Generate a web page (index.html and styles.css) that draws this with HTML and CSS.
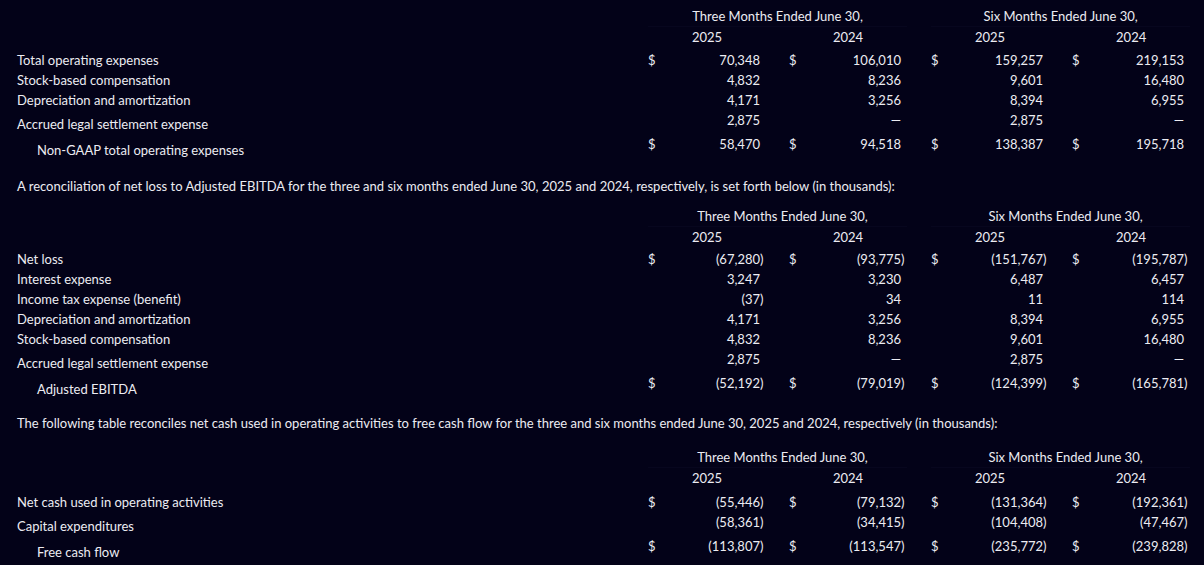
FILE: index.html
```html
<!DOCTYPE html>
<html lang="en">
<head>
<meta charset="utf-8">
<title>Non-GAAP reconciliation</title>
<link rel="stylesheet" href="styles.css">
</head>
<body>
<main class="page">
  <table class="fin">
    <colgroup>
      <col class="c-label"><col class="c-cur"><col class="c-num"><col class="c-par"><col class="c-gap">
      <col class="c-cur"><col class="c-num"><col class="c-par"><col class="c-gap2">
      <col class="c-cur"><col class="c-num"><col class="c-par"><col class="c-gap">
      <col class="c-cur"><col class="c-num"><col class="c-par">
    </colgroup>
    <tr class="r-hd1">
      <td></td><td colspan="7" class="hd">Three Months Ended June 30,</td><td></td><td colspan="7" class="hd">Six Months Ended June 30,</td>
    </tr>
    <tr class="r-hd2">
      <td></td><td colspan="3" class="hd">2025</td><td></td><td colspan="3" class="hd">2024</td><td></td><td colspan="3" class="hd">2025</td><td></td><td colspan="3" class="hd">2024</td>
    </tr>
    <tr class="r">
      <td class="label">Total operating expenses</td>
      <td class="cur">$</td><td class="num">70,348</td><td class="par"></td><td></td>
      <td class="cur">$</td><td class="num">106,010</td><td class="par"></td><td></td>
      <td class="cur">$</td><td class="num">159,257</td><td class="par"></td><td></td>
      <td class="cur">$</td><td class="num">219,153</td><td class="par"></td>
    </tr>
    <tr class="r">
      <td class="label">Stock-based compensation</td>
      <td class="cur"></td><td class="num">4,832</td><td class="par"></td><td></td>
      <td class="cur"></td><td class="num">8,236</td><td class="par"></td><td></td>
      <td class="cur"></td><td class="num">9,601</td><td class="par"></td><td></td>
      <td class="cur"></td><td class="num">16,480</td><td class="par"></td>
    </tr>
    <tr class="r">
      <td class="label">Depreciation and amortization</td>
      <td class="cur"></td><td class="num">4,171</td><td class="par"></td><td></td>
      <td class="cur"></td><td class="num">3,256</td><td class="par"></td><td></td>
      <td class="cur"></td><td class="num">8,394</td><td class="par"></td><td></td>
      <td class="cur"></td><td class="num">6,955</td><td class="par"></td>
    </tr>
    <tr class="r-pre">
      <td class="label">Accrued legal settlement expense</td>
      <td class="cur"></td><td class="num">2,875</td><td class="par"></td><td></td>
      <td class="cur"></td><td class="num">—</td><td class="par"></td><td></td>
      <td class="cur"></td><td class="num">2,875</td><td class="par"></td><td></td>
      <td class="cur"></td><td class="num">—</td><td class="par"></td>
    </tr>
    <tr class="r-tot">
      <td class="label indent">Non-GAAP total operating expenses</td>
      <td class="cur">$</td><td class="num">58,470</td><td class="par"></td><td></td>
      <td class="cur">$</td><td class="num">94,518</td><td class="par"></td><td></td>
      <td class="cur">$</td><td class="num">138,387</td><td class="par"></td><td></td>
      <td class="cur">$</td><td class="num">195,718</td><td class="par"></td>
    </tr>
  </table>

  <p class="note note-1">A reconciliation of net loss to Adjusted EBITDA for the three and six months ended June 30, 2025 and 2024, respectively, is set forth below (in thousands):</p>

  <table class="fin fin-2">
    <colgroup>
      <col class="c-label"><col class="c-cur"><col class="c-num"><col class="c-par"><col class="c-gap">
      <col class="c-cur"><col class="c-num"><col class="c-par"><col class="c-gap2">
      <col class="c-cur"><col class="c-num"><col class="c-par"><col class="c-gap">
      <col class="c-cur"><col class="c-num"><col class="c-par">
    </colgroup>
    <tr class="r-hd1">
      <td></td><td colspan="7" class="hd hd-shift">Three Months Ended June 30,</td><td></td><td colspan="7" class="hd hd-shift">Six Months Ended June 30,</td>
    </tr>
    <tr class="r-hd2">
      <td></td><td colspan="3" class="hd">2025</td><td></td><td colspan="3" class="hd">2024</td><td></td><td colspan="3" class="hd">2025</td><td></td><td colspan="3" class="hd">2024</td>
    </tr>
    <tr class="r">
      <td class="label">Net loss</td>
      <td class="cur">$</td><td class="num">(67,280</td><td class="par">)</td><td></td>
      <td class="cur">$</td><td class="num">(93,775</td><td class="par">)</td><td></td>
      <td class="cur">$</td><td class="num">(151,767</td><td class="par">)</td><td></td>
      <td class="cur">$</td><td class="num">(195,787</td><td class="par">)</td>
    </tr>
    <tr class="r">
      <td class="label">Interest expense</td>
      <td class="cur"></td><td class="num">3,247</td><td class="par"></td><td></td>
      <td class="cur"></td><td class="num">3,230</td><td class="par"></td><td></td>
      <td class="cur"></td><td class="num">6,487</td><td class="par"></td><td></td>
      <td class="cur"></td><td class="num">6,457</td><td class="par"></td>
    </tr>
    <tr class="r">
      <td class="label">Income tax expense (benefit)</td>
      <td class="cur"></td><td class="num">(37</td><td class="par">)</td><td></td>
      <td class="cur"></td><td class="num">34</td><td class="par"></td><td></td>
      <td class="cur"></td><td class="num">11</td><td class="par"></td><td></td>
      <td class="cur"></td><td class="num">114</td><td class="par"></td>
    </tr>
    <tr class="r">
      <td class="label">Depreciation and amortization</td>
      <td class="cur"></td><td class="num">4,171</td><td class="par"></td><td></td>
      <td class="cur"></td><td class="num">3,256</td><td class="par"></td><td></td>
      <td class="cur"></td><td class="num">8,394</td><td class="par"></td><td></td>
      <td class="cur"></td><td class="num">6,955</td><td class="par"></td>
    </tr>
    <tr class="r">
      <td class="label">Stock-based compensation</td>
      <td class="cur"></td><td class="num">4,832</td><td class="par"></td><td></td>
      <td class="cur"></td><td class="num">8,236</td><td class="par"></td><td></td>
      <td class="cur"></td><td class="num">9,601</td><td class="par"></td><td></td>
      <td class="cur"></td><td class="num">16,480</td><td class="par"></td>
    </tr>
    <tr class="r-pre">
      <td class="label">Accrued legal settlement expense</td>
      <td class="cur"></td><td class="num">2,875</td><td class="par"></td><td></td>
      <td class="cur"></td><td class="num">—</td><td class="par"></td><td></td>
      <td class="cur"></td><td class="num">2,875</td><td class="par"></td><td></td>
      <td class="cur"></td><td class="num">—</td><td class="par"></td>
    </tr>
    <tr class="r-tot">
      <td class="label indent">Adjusted EBITDA</td>
      <td class="cur">$</td><td class="num">(52,192</td><td class="par">)</td><td></td>
      <td class="cur">$</td><td class="num">(79,019</td><td class="par">)</td><td></td>
      <td class="cur">$</td><td class="num">(124,399</td><td class="par">)</td><td></td>
      <td class="cur">$</td><td class="num">(165,781</td><td class="par">)</td>
    </tr>
  </table>

  <p class="note note-2">The following table reconciles net cash used in operating activities to free cash flow for the three and six months ended June 30, 2025 and 2024, respectively (in thousands):</p>

  <table class="fin fin-3">
    <colgroup>
      <col class="c-label"><col class="c-cur"><col class="c-num"><col class="c-par"><col class="c-gap">
      <col class="c-cur"><col class="c-num"><col class="c-par"><col class="c-gap2">
      <col class="c-cur"><col class="c-num"><col class="c-par"><col class="c-gap">
      <col class="c-cur"><col class="c-num"><col class="c-par">
    </colgroup>
    <tr class="r-hd1">
      <td></td><td colspan="7" class="hd hd-shift">Three Months Ended June 30,</td><td></td><td colspan="7" class="hd hd-shift">Six Months Ended June 30,</td>
    </tr>
    <tr class="r-hd2 r-hd2-tall">
      <td></td><td colspan="3" class="hd">2025</td><td></td><td colspan="3" class="hd">2024</td><td></td><td colspan="3" class="hd">2025</td><td></td><td colspan="3" class="hd">2024</td>
    </tr>
    <tr class="r">
      <td class="label">Net cash used in operating activities</td>
      <td class="cur">$</td><td class="num">(55,446</td><td class="par">)</td><td></td>
      <td class="cur">$</td><td class="num">(79,132</td><td class="par">)</td><td></td>
      <td class="cur">$</td><td class="num">(131,364</td><td class="par">)</td><td></td>
      <td class="cur">$</td><td class="num">(192,361</td><td class="par">)</td>
    </tr>
    <tr class="r-pre">
      <td class="label">Capital expenditures</td>
      <td class="cur"></td><td class="num">(58,361</td><td class="par">)</td><td></td>
      <td class="cur"></td><td class="num">(34,415</td><td class="par">)</td><td></td>
      <td class="cur"></td><td class="num">(104,408</td><td class="par">)</td><td></td>
      <td class="cur"></td><td class="num">(47,467</td><td class="par">)</td>
    </tr>
    <tr class="r-tot">
      <td class="label indent">Free cash flow</td>
      <td class="cur">$</td><td class="num">(113,807</td><td class="par">)</td><td></td>
      <td class="cur">$</td><td class="num">(113,547</td><td class="par">)</td><td></td>
      <td class="cur">$</td><td class="num">(235,772</td><td class="par">)</td><td></td>
      <td class="cur">$</td><td class="num">(239,828</td><td class="par">)</td>
    </tr>
  </table>
</main>
</body>
</html>
```

FILE: styles.css
```css
html, body {
  margin: 0;
  padding: 0;
  background: #030218;
}

body {
  color: #ececf2;
  font-family: Lato, "Noto Sans", "Liberation Sans", sans-serif;
  font-size: 13px;
  line-height: 20px;
  width: 1204px;
  height: 565px;
  overflow: hidden;
}

.page {
  display: flex;
  flex-direction: column;
  padding: 6px 0 0 17px;
}

.fin {
  border-collapse: collapse;
  table-layout: fixed;
  width: 1173px;
}

.fin td {
  padding: 0;
  white-space: nowrap;
}

.c-label { width: 631px; }
.c-cur { width: 12px; }
.c-num { width: 100px; }
.c-par { width: 6px; }
.c-gap { width: 23px; }
.c-gap2 { width: 24px; }

.r-hd1 { height: 19px; }
.r-hd2 { height: 23px; }
.r-hd2-tall { height: 24px; }
.r { height: 19.5px; }
.r-pre { height: 24px; }
.r-tot { height: 26px; }

.r-hd1 td, .r-hd2 td { vertical-align: top; }

.hd {
  text-align: center;
}

.r-hd1 .hd {
  border-bottom: 1px solid #07061e;
}

.hd-shift {
  padding-left: 10px !important;
}

.r td, .r-pre td, .r-tot td {
  vertical-align: top;
}

.r-pre td.label, .r-tot td.label {
  vertical-align: bottom;
}

.label.indent {
  padding-left: 20px;
}

.num {
  text-align: right;
}

.par {
  text-align: left;
}

.note {
  margin: 0;
}

.note-1 { margin-top: 16px; }
.note-2 { margin-top: 14px; }

.fin-2 { margin-top: 10px; }
.fin-3 { margin-top: 14px; }
```
